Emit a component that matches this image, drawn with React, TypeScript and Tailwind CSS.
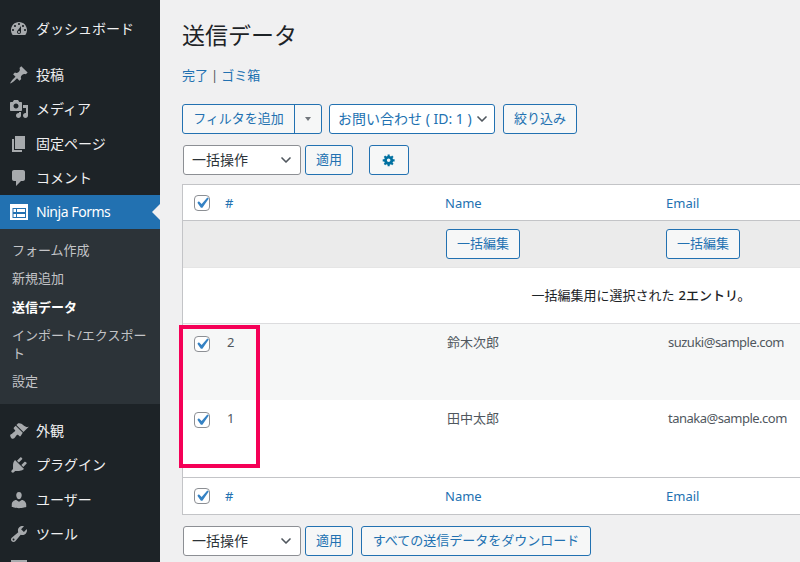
import type { ReactNode } from "react"
import { ChevronDown } from "lucide-react"

const dashIcons: Record<string, string> = {
  dashboard:
    "M3.76 16h12.48c1.1-1.37 1.76-3.11 1.76-5 0-4.42-3.58-8-8-8s-8 3.58-8 8c0 1.89.66 3.63 1.76 5zM10 4c.55 0 1 .45 1 1s-.45 1-1 1-1-.45-1-1 .45-1 1-1zM6 6c.55 0 1 .45 1 1s-.45 1-1 1-1-.45-1-1 .45-1 1-1zm8 0c.55 0 1 .45 1 1s-.45 1-1 1-1-.45-1-1 .45-1 1-1zm-5.37 5.55L12 7v6c0 1.1-.9 2-2 2s-2-.9-2-2c0-.57.24-1.08.63-1.45zM4 10c.55 0 1 .45 1 1s-.45 1-1 1-1-.45-1-1 .45-1 1-1zm12 0c.55 0 1 .45 1 1s-.45 1-1 1-1-.45-1-1 .45-1 1-1zm-5 3c0-.55-.45-1-1-1s-1 .45-1 1 .45 1 1 1 1-.45 1-1z",
  post: "M10.44 3.02l1.82-1.82 6.36 6.35-1.83 1.82c-1.05-.68-2.48-.57-3.41.36l-.75.75c-.92.93-1.04 2.35-.35 3.41l-1.83 1.82-2.41-2.41-2.8 2.79c-.42.42-3.38 2.71-3.8 2.29s1.86-3.39 2.28-3.81l2.79-2.79L4.1 9.36l1.83-1.82c1.05.69 2.48.57 3.4-.36l.75-.75c.93-.92 1.05-2.35.36-3.41z",
  media:
    "M13 11V4c0-.55-.45-1-1-1h-1.67L9 1H5L3.67 3H2c-.55 0-1 .45-1 1v7c0 .55.45 1 1 1h10c.55 0 1-.45 1-1zM7 4.5c1.38 0 2.5 1.12 2.5 2.5S8.38 9.5 7 9.5 4.5 8.38 4.5 7 5.62 4.5 7 4.5zM14 6h5v10.5c0 1.38-1.12 2.5-2.5 2.5S14 17.88 14 16.5s1.12-2.5 2.5-2.5c.17 0 .34.02.5.05V9h-3V6zm-4 8.05V13h2v3.5c0 1.38-1.12 2.5-2.5 2.5S7 17.88 7 16.5 8.12 14 9.5 14c.17 0 .34.02.5.05z",
  page: "M6 15V2h10v13H6zm-1 1h8v2H3V5h2v11z",
  comment: "M5 2h9c1.1 0 2 .9 2 2v7c0 1.1-.9 2-2 2h-2l-5 5v-5H5c-1.1 0-2-.9-2-2V4c0-1.1.9-2 2-2z",
  appearance:
    "M14.48 11.06L7.41 3.99l1.5-1.5c.5-.56 2.3-.47 3.51.32 1.21.8 1.43 1.28 2.91 2.1 1.18.64 2.45 1.26 4.45.85zm-.71.71L6.7 4.7 4.93 6.47c-.39.39-.39 1.02 0 1.41l1.06 1.06c.39.39.39 1.03 0 1.42-.6.6-1.43 1.11-2.21 1.69-.35.26-.7.53-1.01.84C1.43 13.26 1 14.09 1.25 15c.25.91.63 1.55 1.16 2.16.37.42.98.6 1.59.55.9-.08 1.6-.63 2.14-1.44.58-.78 1.09-1.61 1.69-2.21.39-.39 1.03-.39 1.42 0l1.06 1.06c.39.39 1.02.39 1.41 0z",
  plugin:
    "M13.11 4.36L9.87 7.6 8 5.73l3.24-3.24c.35-.34 1.05-.2 1.56.32.52.51.66 1.21.31 1.55zm-8 1.77l.91-1.12 9.01 9.01-1.19.84c-.71.71-2.63 1.16-3.82 1.16H6.14L4.9 17.26c-.59.59-1.54.59-2.12 0-.59-.58-.59-1.53 0-2.12l1.24-1.24v-3.88c0-1.13.4-3.19 1.09-3.89zm7.26 3.97l3.24-3.24c.34-.35 1.04-.21 1.55.31.52.51.66 1.21.31 1.55l-3.24 3.25z",
  users:
    "M10 9.25c-2.27 0-2.73-3.44-2.73-3.44C7 4.02 7.82 2 9.97 2c2.16 0 2.98 2.02 2.71 3.81 0 0-.41 3.44-2.68 3.44zm0 2.57L12.72 10c2.39 0 4.52 2.33 4.52 4.53v2.49s-3.65 1.13-7.24 1.13c-3.65 0-7.24-1.13-7.24-1.13v-2.49c0-2.25 1.94-4.48 4.47-4.48z",
  tools:
    "M16.68 9.77c-1.34 1.34-3.3 1.67-4.95.99l-5.41 6.52c-.99.99-2.59.99-3.58 0s-.99-2.59 0-3.57l6.52-5.42c-.68-1.65-.35-3.61.99-4.95 1.28-1.28 3.12-1.62 4.72-1.06l-2.89 2.89 2.82 2.82 2.86-2.87c.53 1.58.18 3.39-1.08 4.65zM3.81 16.21c.4.39 1.04.39 1.43 0 .4-.4.4-1.04 0-1.43-.39-.4-1.03-.4-1.43 0-.39.39-.39 1.03 0 1.43z",
}

function DashIcon({ name }: { name: string }) {
  return (
    <svg viewBox="0 0 20 20" className="h-5 w-5 shrink-0 fill-[#a7aaad]">
      <path fillRule="evenodd" d={dashIcons[name]} />
    </svg>
  )
}

function NinjaIcon() {
  return (
    <svg viewBox="0 0 18 16" className="ml-px h-4 w-[18px] shrink-0">
      <path fill="#fff" d="M0 0h18v16H0z" />
      <path fill="#2271b1" d="M2.5 4h13.5v10H2.5z" />
      <path fill="#fff" d="M3.5 5h2.5v3H3.5zM7 5h8v3H7zM3.5 10h2.5v3H3.5zM7 10h8v3H7z" />
    </svg>
  )
}

function MenuItem({ icon, label }: { icon: string; label: string }) {
  return (
    <div className="flex h-[34.4px] items-center gap-[7px] pl-[9px] text-sm text-[#f0f0f1]">
      <DashIcon name={icon} />
      <span>{label}</span>
    </div>
  )
}

function Sidebar() {
  return (
    <div className="h-full w-40 shrink-0 bg-[#1d2327] pt-3">
      <MenuItem icon="dashboard" label="ダッシュボード" />
      <div className="h-[11.2px]" />
      <MenuItem icon="post" label="投稿" />
      <MenuItem icon="media" label="メディア" />
      <MenuItem icon="page" label="固定ページ" />
      <MenuItem icon="comment" label="コメント" />
      <div className="relative flex h-[34px] items-center gap-[8px] bg-[#2271b1] pl-[9px] text-sm text-white">
        <NinjaIcon />
        <span className="tracking-[-0.45px]">Ninja Forms</span>
        <div className="absolute right-0 top-[9px] border-y-8 border-r-8 border-y-transparent border-r-[#f0f0f1]" />
      </div>
      <div className="bg-[#2c3338] pb-[8.2px] pt-[7px] text-[13px] leading-[18.2px] text-[#c3c4c7]">
        <div className="px-3 py-[5px]">フォーム作成</div>
        <div className="px-3 py-[5px]">新規追加</div>
        <div className="px-3 py-[5px] font-bold text-white">送信データ</div>
        <div className="px-3 py-[5px]">インポート/エクスポート</div>
        <div className="px-3 py-[5px]">設定</div>
      </div>
      <div className="h-[10px]" />
      <MenuItem icon="appearance" label="外観" />
      <MenuItem icon="plugin" label="プラグイン" />
      <MenuItem icon="users" label="ユーザー" />
      <MenuItem icon="tools" label="ツール" />
      <div className="flex h-[34.4px] items-center pl-[9px]">
        <svg viewBox="0 0 20 20" className="h-5 w-5 fill-[#a7aaad]">
          <path d="M2 2h16v4H2zM2 8h16v10H2z" />
        </svg>
      </div>
    </div>
  )
}

function Btn({ children, className = "" }: { children: ReactNode; className?: string }) {
  return (
    <div
      className={`flex h-[30px] items-center justify-center rounded-[3px] border border-[#2271b1] bg-[#f6f7f7] text-[13px] text-[#2271b1] ${className}`}
    >
      {children}
    </div>
  )
}

function Select({ label, className = "" }: { label: string; className?: string }) {
  return (
    <div
      className={`flex h-[30px] items-center justify-between rounded-[3px] border border-[#8c8f94] bg-white pl-2 pr-[6px] text-sm text-[#2c3338] ${className}`}
    >
      <span>{label}</span>
      <ChevronDown size={16} strokeWidth={2.5} className="text-[#50575e]" />
    </div>
  )
}

function Check() {
  return (
    <div className="h-4 w-4 rounded-[4px] border border-[#8c8f94] bg-white">
      <svg viewBox="0 0 20 20" className="-ml-1 -mt-1 h-[22px] w-[22px] max-w-none fill-[#3582c4]">
        <path d="M14.83 4.89l1.34.94-5.81 8.38H9.02L5.78 9.67l1.34-1.25 2.57 2.4z" />
      </svg>
    </div>
  )
}

function HeadRow({ className = "" }: { className?: string }) {
  return (
    <div className={`flex items-center text-[13px] text-[#2271b1] ${className}`}>
      <div className="w-[42px] pl-[11px]">
        <Check />
      </div>
      <div className="w-[220px] pt-0.5">#</div>
      <div className="w-[221px] pt-0.5">Name</div>
      <div className="pt-0.5">Email</div>
    </div>
  )
}

function DataRow({ id, name, email, className = "" }: { id: string; name: string; email: string; className?: string }) {
  return (
    <div className={`flex pt-[10px] text-[13px] leading-[16px] text-[#50575e] ${className}`}>
      <div className="w-[42px] pl-[11px] pt-[2px]">
        <Check />
      </div>
      <div className="w-[220px] pl-[2px]">{id}</div>
      <div className="w-[221px] pl-[2px]">{name}</div>
      <div className="pl-[2px] tracking-[-0.5px]">{email}</div>
    </div>
  )
}

export default function App() {
  return (
    <div className="flex h-[562px] w-[800px] overflow-hidden bg-[#f0f0f1] font-['Noto_Sans','Noto_Sans_CJK_JP',sans-serif]">
      <Sidebar />
      <div className="min-w-0 flex-1 pl-[22px]">
        <h1 className="mt-5 text-[23px] leading-[30px] text-[#1d2327]">送信データ</h1>
        <div className="mt-[15px] flex gap-[3px] text-[13px] leading-5 text-[#2271b1]">
          <span>完了</span>
          <span className="text-[#50575e]">|</span>
          <span>ゴミ箱</span>
        </div>
        <div className="mt-[19px] flex gap-[7px]">
          <div className="flex h-[30px] w-[140px] rounded-[3px] border border-[#2271b1] bg-[#f6f7f7] text-[13px] text-[#2271b1]">
            <div className="flex w-[112px] items-center justify-center border-r border-[#2271b1]">フィルタを追加</div>
            <div className="flex flex-1 items-center justify-center">
              <div className="border-x-[3px] border-t-4 border-x-transparent border-t-[#72777c]" />
            </div>
          </div>
          <div className="flex h-[30px] w-[166px] items-center justify-between rounded-[3px] border border-[#2271b1] bg-white pl-2 pr-1 text-sm text-[#2271b1]">
            <span>お問い合わせ ( ID: 1 )</span>
            <ChevronDown size={16} strokeWidth={2.5} className="text-[#50575e]" />
          </div>
          <Btn className="ml-px w-[74px]">絞り込み</Btn>
        </div>
        <div className="ml-px mt-[11px] flex">
          <Select label="一括操作" className="w-[118px]" />
          <Btn className="ml-1 w-[48px]">適用</Btn>
          <Btn className="ml-4 w-10 border-[#0071a1]">
            <svg viewBox="0 0 20 20" className="h-[14px] w-[14px] fill-[#0071a1]">
              <path
                fillRule="evenodd"
                d="M18 12h-2.18c-.17.7-.44 1.35-.81 1.93l1.54 1.54-2.1 2.1-1.54-1.54c-.58.36-1.23.63-1.91.79V19H8v-2.18c-.68-.16-1.33-.43-1.91-.79l-1.54 1.54-2.12-2.12 1.54-1.54c-.36-.58-.63-1.23-.79-1.91H1V9.03h2.17c.16-.7.44-1.35.8-1.94L2.43 5.55l2.1-2.1 1.54 1.54c.58-.37 1.24-.64 1.93-.81V2h3v2.18c.68.16 1.33.43 1.91.79l1.54-1.54 2.12 2.12-1.54 1.54c.36.59.64 1.24.8 1.94H18V12zm-8.5 1c1.38 0 2.5-1.12 2.5-2.5S10.88 8 9.5 8 7 9.12 7 10.5 8.12 13 9.5 13z"
              />
            </svg>
          </Btn>
        </div>
        <div className="relative mt-[9px] w-[916px] border border-[#c3c4c7] bg-white">
          <HeadRow className="h-9 border-b border-[#c3c4c7]" />
          <div className="flex h-[47px] items-center border-b border-[#e5e5e5] bg-[#ebebeb] pl-[263px]">
            <Btn className="w-[74px]">一括編集</Btn>
            <Btn className="ml-[146px] w-[74px]">一括編集</Btn>
          </div>
          <div className="flex h-[56px] items-center justify-center border-b border-[#dcdcde] pl-[2px] text-[13px] text-[#1d2327]">
            一括編集用に選択された <span className="ml-1 font-medium">2エントリ。</span>
          </div>
          <DataRow id="2" name="鈴木次郎" email="suzuki@sample.com" className="h-[76px] bg-[#f6f7f7]" />
          <DataRow id="1" name="田中太郎" email="tanaka@sample.com" className="h-[77px] bg-white" />
          <HeadRow className="h-[37px] border-t border-[#c3c4c7]" />
          <div className="absolute left-[-4px] top-[140px] h-[143px] w-[81px] border-4 border-[#f50057]" />
        </div>
        <div className="ml-px mt-[11px] flex">
          <Select label="一括操作" className="w-[118px]" />
          <Btn className="ml-1 w-[48px]">適用</Btn>
          <Btn className="ml-2 w-[230px]">すべての送信データをダウンロード</Btn>
        </div>
      </div>
    </div>
  )
}
